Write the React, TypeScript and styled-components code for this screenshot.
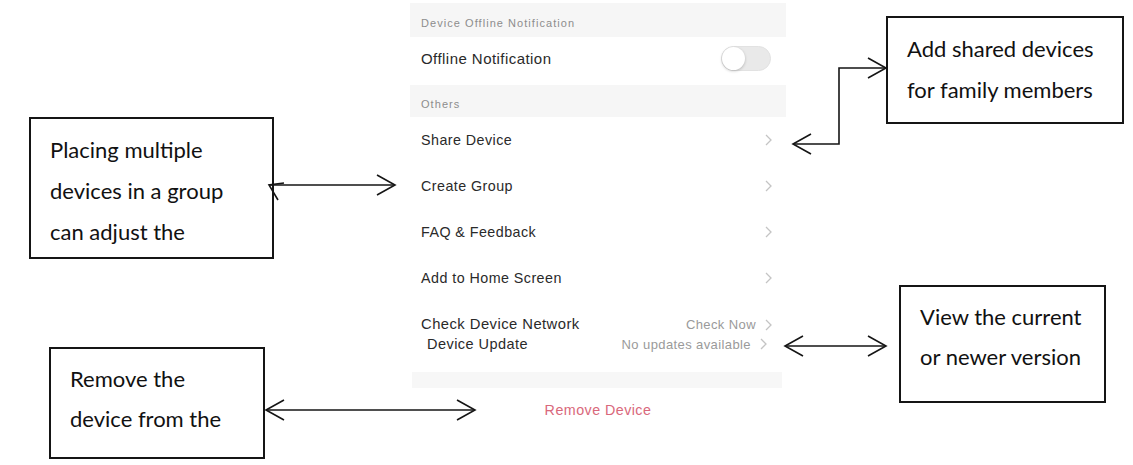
import styled, { createGlobalStyle } from 'styled-components';

const GlobalStyle = createGlobalStyle`
  html, body {
    margin: 0;
    padding: 0;
    background: #ffffff;
  }
`;

const Canvas = styled.div`
  position: relative;
  width: 1133px;
  height: 465px;
  overflow: hidden;
  background: #ffffff;
  padding-left: 410px;
  padding-top: 3px;
  box-sizing: border-box;
  font-family: 'Liberation Sans', Arial, sans-serif;
`;

const Panel = styled.div`
  width: 376px;
  display: flex;
  flex-direction: column;
  background: #ffffff;
`;

const SectionHeader = styled.div<{ $h: number; $pb: number }>`
  height: ${(p) => p.$h}px;
  box-sizing: border-box;
  padding: 0 0 ${(p) => p.$pb}px 11px;
  display: flex;
  align-items: flex-end;
  background: #f6f6f6;
  color: #8d8d8d;
  font-size: 11px;
  letter-spacing: 1.05px;
`;

const Row = styled.div<{ $h: number; $align?: string; $pl?: number; $pr?: number; $pb?: number }>`
  height: ${(p) => p.$h}px;
  box-sizing: border-box;
  padding: 0 ${(p) => p.$pr ?? 14}px ${(p) => p.$pb ?? 0}px ${(p) => p.$pl ?? 11}px;
  display: flex;
  align-items: ${(p) => p.$align ?? 'center'};
  justify-content: space-between;
`;

const Label = styled.span<{ $size?: number }>`
  color: #2a2a2a;
  font-size: ${(p) => p.$size ?? 14.3}px;
  letter-spacing: 0.45px;
  line-height: 17px;
`;

const Trail = styled.span`
  display: flex;
  align-items: center;
  gap: 9px;
`;

const Value = styled.span`
  color: #9a9a9a;
  font-size: 13px;
  letter-spacing: 0.4px;
  line-height: 17px;
`;

const Toggle = styled.span`
  position: relative;
  width: 50px;
  height: 25px;
  border-radius: 13px;
  background: #e9e9e9;
  box-sizing: border-box;
  border: 1px solid #e2e2e2;
  margin-right: 1px;
`;

const Knob = styled.span`
  position: absolute;
  left: 0;
  top: 0;
  width: 23px;
  height: 23px;
  border-radius: 50%;
  background: #ffffff;
  box-shadow: 0 1px 3px rgba(0, 0, 0, 0.22);
`;

const Spacer = styled.div<{ $h: number }>`
  height: ${(p) => p.$h}px;
`;

const Band = styled.div`
  height: 16px;
  margin: 0 4px 0 2px;
  background: #f7f7f7;
`;

const Danger = styled.div`
  height: 44px;
  display: flex;
  align-items: center;
  justify-content: center;
  color: #d9687b;
  font-size: 14.3px;
  letter-spacing: 0.45px;
`;

const Note = styled.div<{ $x: number; $y: number; $w: number; $h: number; $pt: number; $lh: number }>`
  position: absolute;
  left: ${(p) => p.$x}px;
  top: ${(p) => p.$y}px;
  width: ${(p) => p.$w}px;
  height: ${(p) => p.$h}px;
  box-sizing: border-box;
  border: 2px solid #151515;
  padding: ${(p) => p.$pt}px 0 0 19px;
  font-family: Lato, 'Open Sans', sans-serif;
  font-size: 22px;
  line-height: ${(p) => p.$lh}px;
  color: #111111;
  white-space: nowrap;
`;

const Arrows = styled.svg`
  position: absolute;
  left: 0;
  top: 0;
  pointer-events: none;
`;

const Chevron = () => (
  <svg width="7" height="12" viewBox="0 0 7 12">
    <polyline points="1,1 6,6 1,11" fill="none" stroke="#c4c4c4" strokeWidth="1.3" />
  </svg>
);

const items = ['Share Device', 'Create Group', 'FAQ & Feedback', 'Add to Home Screen'];

const head = (x: number, y: number, dir: 1 | -1) =>
  `M${x - dir * 18},${y - 10} L${x},${y} L${x - dir * 18},${y + 10}`;

export default function App() {
  return (
    <>
      <GlobalStyle />
      <Canvas>
        <Panel>
          <SectionHeader $h={34} $pb={8}>Device Offline Notification</SectionHeader>
          <Row $h={48} $pb={6}>
            <Label $size={15}>Offline Notification</Label>
            <Toggle>
              <Knob />
            </Toggle>
          </Row>
          <SectionHeader $h={32} $pb={7}>Others</SectionHeader>
          {items.map((t) => (
            <Row key={t} $h={46}>
              <Label>{t}</Label>
              <Chevron />
            </Row>
          ))}
          <Row $h={32} $align="flex-end">
            <Label $size={14.8}>Check Device Network</Label>
            <Trail>
              <Value>Check Now</Value>
              <Chevron />
            </Trail>
          </Row>
          <Row $h={22} $pl={17} $pr={19}>
            <Label $size={14.5}>Device Update</Label>
            <Trail>
              <Value>No updates available</Value>
              <Chevron />
            </Trail>
          </Row>
          <Spacer $h={17} />
          <Band />
          <Danger>Remove Device</Danger>
        </Panel>

        <Note $x={29} $y={117} $w={245} $h={142} $pt={10} $lh={41}>
          Placing multiple
          <br />
          devices in a group
          <br />
          can adjust the
        </Note>
        <Note $x={886} $y={16} $w={238} $h={108} $pt={10} $lh={41}>
          Add shared devices
          <br />
          for family members
        </Note>
        <Note $x={899} $y={285} $w={207} $h={118} $pt={10} $lh={40}>
          View the current
          <br />
          or newer version
        </Note>
        <Note $x={49} $y={347} $w={216} $h={112} $pt={10} $lh={40}>
          Remove the
          <br />
          device from the
        </Note>

        <Arrows width="1133" height="465" viewBox="0 0 1133 465">
          <g fill="none" stroke="#151515" strokeWidth="1.6">
            <path d="M269,185 L395,185" />
            <path d={head(395, 185, 1)} />
            <path d="M284,183 L269,185 L278,200" />

            <path d="M886,68 L839,68 L839,144 L793,144" />
            <path d={head(886, 68, 1)} />
            <path d={head(793, 144, -1)} />

            <path d="M785,346 L886,346" />
            <path d={head(886, 346, 1)} />
            <path d={head(785, 346, -1)} />

            <path d="M266,410 L475,410" />
            <path d={head(475, 410, 1)} />
            <path d={head(266, 410, -1)} />
          </g>
        </Arrows>
      </Canvas>
    </>
  );
}
